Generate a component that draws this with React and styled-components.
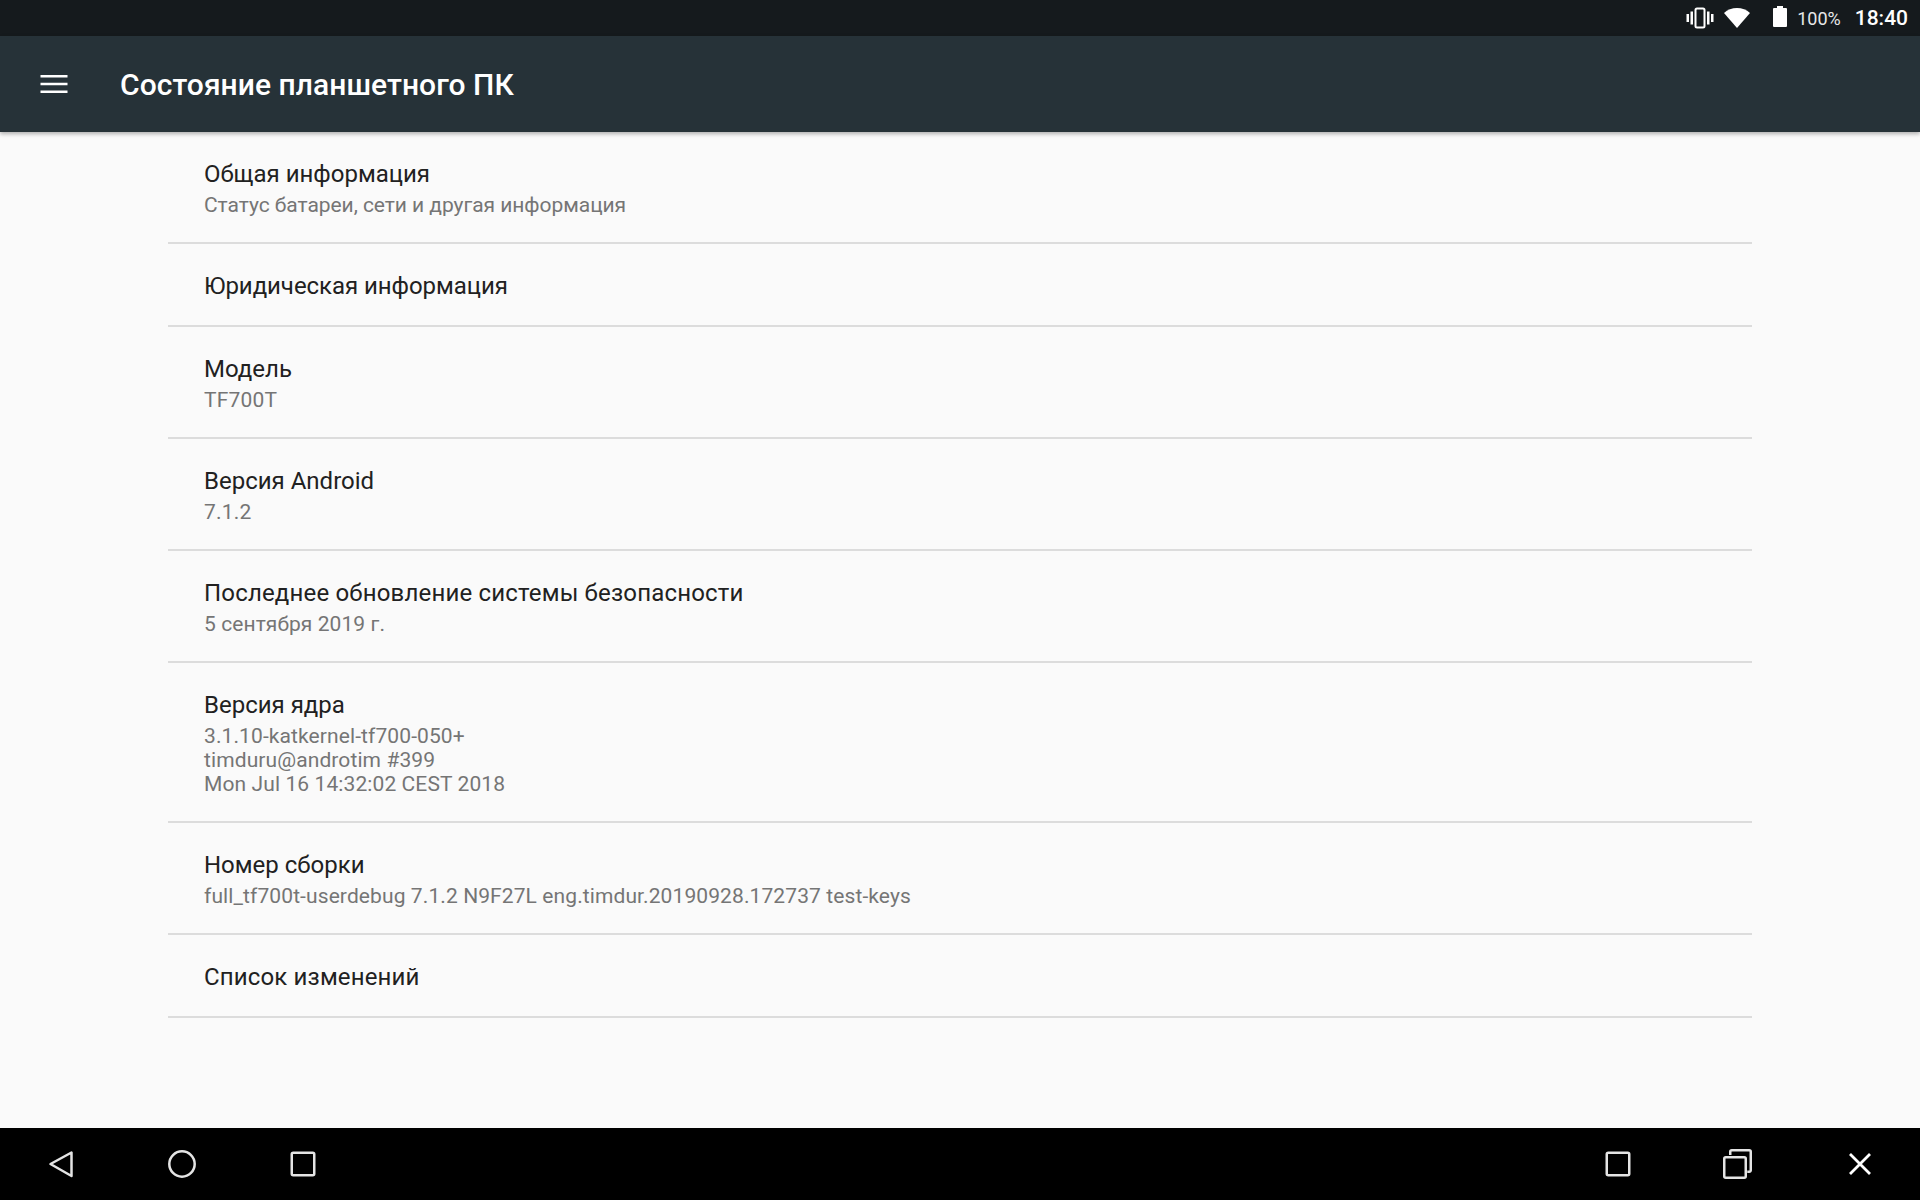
import React from 'react';
import styled, { createGlobalStyle } from 'styled-components';

const rows = [
  { title: 'Общая информация', lines: ['Статус батареи, сети и другая информация'], summarySpacing: -0.05 },
  { title: 'Юридическая информация', lines: [], titleSpacing: -0.05 },
  { title: 'Модель', lines: ['TF700T'], summarySpacing: 0.2 },
  { title: 'Версия Android', lines: ['7.1.2'], summarySpacing: 0.2 },
  {
    title: 'Последнее обновление системы безопасности',
    lines: ['5 сентября 2019 г.'],
    titleSpacing: 0.18,
    summarySpacing: 0.08,
  },
  {
    title: 'Версия ядра',
    lines: ['3.1.10-katkernel-tf700-050+', 'timduru@androtim #399', 'Mon Jul 16 14:32:02 CEST 2018'],
    summarySpacing: 0.1,
  },
  {
    title: 'Номер сборки',
    lines: ['full_tf700t-userdebug 7.1.2 N9F27L eng.timdur.20190928.172737 test-keys'],
    summarySpacing: 0.1,
  },
  { title: 'Список изменений', lines: [], titleSpacing: 0.15 },
];

const App = () => (
  <>
    <GlobalStyle />
    <Screen>
      <StatusBar>
        <VibrateIcon width="30" height="30" viewBox="0 0 30 30">
          <path d="M1.500 11h2.500v8H1.500zM5.500 8.500h2.500v13H5.500zM22 8.500h2.500v13H22zM26 11h2.500v8H26z" fill="#fff" />
          <rect x="10.500" y="5.500" width="9" height="19" rx="1.500" fill="none" stroke="#fff" strokeWidth="2" />
        </VibrateIcon>
        <WifiIcon width="28" height="24" viewBox="0 0 28 24">
          <path d="M14 22L1 7C4.500 3.800 9 2 14 2s9.500 1.800 13 5z" fill="#fff" />
        </WifiIcon>
        <BatteryIcon width="16" height="21" viewBox="0 0 16 21">
          <path d="M5 0h6v2h3a1 1 0 0 1 1 1v17a1 1 0 0 1-1 1H2a1 1 0 0 1-1-1V3a1 1 0 0 1 1-1h3z" fill="#fff" />
        </BatteryIcon>
        <Percent>100%</Percent>
        <Clock>18:40</Clock>
      </StatusBar>
      <Toolbar>
        <MenuIcon width="36" height="36" viewBox="0 0 36 36">
          <path d="M4.500 9h27v2.500h-27zM4.500 16.800h27v2.500h-27zM4.500 24.500h27V27h-27z" fill="#fff" />
        </MenuIcon>
        <Title>Состояние планшетного ПК</Title>
      </Toolbar>
      <Content>
        <List>
          {rows.map((row) => (
            <Row key={row.title}>
              <RowTitle style={{ letterSpacing: row.titleSpacing || 0 }}>{row.title}</RowTitle>
              {row.lines.length > 0 && (
                <Summary style={{ letterSpacing: row.summarySpacing || 0 }}>
                  {row.lines.map((line) => (
                    <SummaryLine key={line}>{line}</SummaryLine>
                  ))}
                </Summary>
              )}
            </Row>
          ))}
        </List>
      </Content>
      <NavBar>
        <NavGroup>
          <NavButton>
            <svg width="36" height="36" viewBox="0 0 36 36">
              <path d="M7.500 18L28.500 6.500V30z" fill="none" stroke="#e4e4e4" strokeWidth="2.500" strokeLinejoin="round" />
            </svg>
          </NavButton>
          <NavButton>
            <svg width="36" height="36" viewBox="0 0 36 36">
              <circle cx="18" cy="18" r="12.700" fill="none" stroke="#e4e4e4" strokeWidth="2.500" />
            </svg>
          </NavButton>
          <NavButton>
            <SquareGlyph />
          </NavButton>
        </NavGroup>
        <NavGroup>
          <NavButton>
            <SquareGlyph />
          </NavButton>
          <NavButton>
            <svg width="36" height="36" viewBox="0 0 36 36">
              <path
                d="M9.250 9V5.750a1.500 1.500 0 0 1 1.500-1.500h17.500a1.500 1.500 0 0 1 1.500 1.500v18.500a1.500 1.500 0 0 1-1.500 1.500h-2"
                fill="none"
                stroke="#e4e4e4"
                strokeWidth="2.500"
              />
              <rect x="3.250" y="11.250" width="21.500" height="20.500" rx="1.500" fill="none" stroke="#e4e4e4" strokeWidth="2.500" />
            </svg>
          </NavButton>
          <NavButton>
            <svg width="36" height="36" viewBox="0 0 36 36">
              <path d="M8 8l20 20M28 8L8 28" fill="none" stroke="#fff" strokeWidth="2.800" />
            </svg>
          </NavButton>
        </NavGroup>
      </NavBar>
    </Screen>
  </>
);

const SquareGlyph = () => (
  <svg width="36" height="36" viewBox="0 0 36 36">
    <rect x="6.750" y="6.750" width="22.500" height="22.500" rx="1.500" fill="none" stroke="#e4e4e4" strokeWidth="2.500" />
  </svg>
);

const GlobalStyle = createGlobalStyle`
  html, body {
    margin: 0;
    padding: 0;
    background: #fafafa;
  }
`;

const Screen = styled.div`
  display: flex;
  flex-direction: column;
  width: 1920px;
  height: 1200px;
  overflow: hidden;
  background: #fafafa;
  font-family: Roboto, "Liberation Sans", sans-serif;
`;

const StatusBar = styled.div`
  display: flex;
  align-items: center;
  justify-content: flex-end;
  height: 36px;
  padding-right: 12px;
  background: #151a1d;
  color: #fff;
`;

const VibrateIcon = styled.svg`
  margin-right: 8px;
`;

const WifiIcon = styled.svg`
  margin-right: 21px;
`;

const BatteryIcon = styled.svg`
  margin-right: 9px;
  margin-bottom: 3px;
`;

const Percent = styled.span`
  font-size: 18px;
  margin-right: 14px;
  color: #e8e8e8;
`;

const Clock = styled.span`
  font-size: 21px;
  font-weight: 500;
`;

const Toolbar = styled.div`
  position: relative;
  z-index: 1;
  display: flex;
  align-items: center;
  height: 96px;
  padding-left: 36px;
  background: #263238;
  box-shadow: 0 2px 4px rgba(0, 0, 0, 0.3);
`;

const MenuIcon = styled.svg`
  flex: none;
  margin-right: 48px;
`;

const Title = styled.h1`
  margin: 0;
  font-size: 30px;
  font-weight: 500;
  letter-spacing: 0.05px;
  color: #fff;
`;

const Content = styled.main`
  flex: 1;
  padding: 0 168px;
`;

const List = styled.div`
  display: flex;
  flex-direction: column;
`;

const Row = styled.div`
  padding: 26px 36px 23px;
  border-bottom: 2px solid #dcdcdc;
`;

const RowTitle = styled.div`
  font-size: 24px;
  line-height: 32px;
  color: #212121;
`;

const Summary = styled.div`
  margin: 3px 0 2px;
  font-size: 21px;
  line-height: 24px;
  color: #757575;
`;

const SummaryLine = styled.div``;

const NavBar = styled.nav`
  display: flex;
  justify-content: space-between;
  height: 72px;
  background: #000;
`;

const NavGroup = styled.div`
  display: flex;
`;

const NavButton = styled.div`
  display: flex;
  align-items: center;
  justify-content: center;
  width: 121px;
`;

export default App;
